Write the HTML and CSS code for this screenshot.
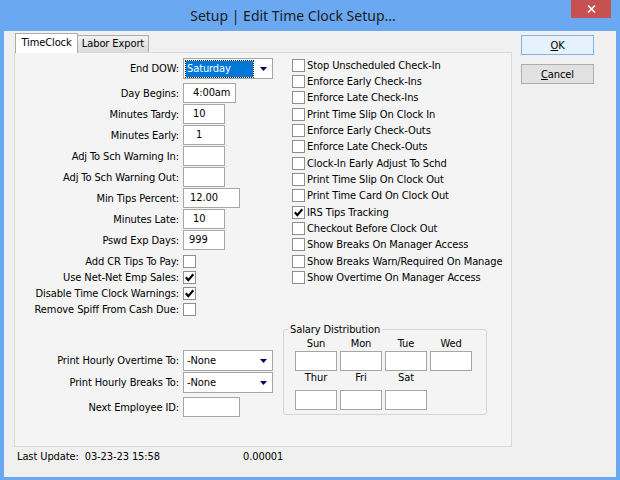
FILE: index.html
```html
<!DOCTYPE html>
<html lang="en">
<head>
    <meta charset="UTF-8">
    <title>Setup | Edit Time Clock Setup...</title>
    <link rel="stylesheet" href="styles.css">
</head>
<body>
<div class="window">
    <div class="titlebar">
        <div class="title">Setup | Edit Time Clock Setup...</div>
        <div class="close">
            <svg width="9" height="8" viewBox="0 0 9 8"><path d="M1 0.5L8 7.5M8 0.5L1 7.5" stroke="#fff" stroke-width="1.6"/></svg>
        </div>
    </div>

    <div class="client">
        <div class="main">
            <div class="tabframe">
                <div class="tabs">
                    <div class="tab active">TimeClock</div>
                    <div class="tab">Labor Export</div>
                </div>

                <div class="panel">
                    <div class="col-left">
                        <div class="field-row select-row">
                            <span class="field-label">End DOW:</span>
                            <div class="select">
                                <span class="select-value focused">Saturday</span>
                                <svg class="arrow" width="7" height="4" viewBox="0 0 7 4"><polygon points="0,0 7,0 3.5,4" fill="#000060"/></svg>
                            </div>
                        </div>
                        <div class="field-row">
                            <span class="field-label">Day Begins:</span>
                            <span class="input w-53 pad-10">4:00am</span>
                        </div>
                        <div class="field-row">
                            <span class="field-label">Minutes Tardy:</span>
                            <span class="input w-42 pad-10">10</span>
                        </div>
                        <div class="field-row">
                            <span class="field-label">Minutes Early:</span>
                            <span class="input w-42 pad-13">1</span>
                        </div>
                        <div class="field-row">
                            <span class="field-label">Adj To Sch Warning In:</span>
                            <span class="input w-42"></span>
                        </div>
                        <div class="field-row">
                            <span class="field-label">Adj To Sch Warning Out:</span>
                            <span class="input w-42"></span>
                        </div>
                        <div class="field-row">
                            <span class="field-label">Min Tips Percent:</span>
                            <span class="input w-57 pad-7">12.00</span>
                        </div>
                        <div class="field-row">
                            <span class="field-label">Minutes Late:</span>
                            <span class="input w-42 pad-10">10</span>
                        </div>
                        <div class="field-row">
                            <span class="field-label">Pswd Exp Days:</span>
                            <span class="input w-42 pad-6">999</span>
                        </div>

                        <div class="check-rows">
                            <div class="check-row">
                                <span class="field-label">Add CR Tips To Pay:</span>
                                <span class="check"></span>
                            </div>
                            <div class="check-row">
                                <span class="field-label">Use Net-Net Emp Sales:</span>
                                <span class="check"><svg viewBox="0 0 11 11"><path d="M1.8 5.3L4.3 8.2L9.3 2.3"/></svg></span>
                            </div>
                            <div class="check-row">
                                <span class="field-label">Disable Time Clock Warnings:</span>
                                <span class="check"><svg viewBox="0 0 11 11"><path d="M1.8 5.3L4.3 8.2L9.3 2.3"/></svg></span>
                            </div>
                            <div class="check-row">
                                <span class="field-label">Remove Spiff From Cash Due:</span>
                                <span class="check"></span>
                            </div>
                        </div>

                        <div class="print-rows">
                            <div class="field-row select-row tight">
                                <span class="field-label">Print Hourly Overtime To:</span>
                                <div class="select">
                                    <span class="select-value">-None</span>
                                    <svg class="arrow" width="7" height="4" viewBox="0 0 7 4"><polygon points="0,0 7,0 3.5,4" fill="#000060"/></svg>
                                </div>
                            </div>
                            <div class="field-row select-row">
                                <span class="field-label">Print Hourly Breaks To:</span>
                                <div class="select">
                                    <span class="select-value">-None</span>
                                    <svg class="arrow" width="7" height="4" viewBox="0 0 7 4"><polygon points="0,0 7,0 3.5,4" fill="#000060"/></svg>
                                </div>
                            </div>
                            <div class="field-row">
                                <span class="field-label">Next Employee ID:</span>
                                <span class="input w-57"></span>
                            </div>
                        </div>
                    </div>

                    <div class="col-right">
                        <ul class="checklist">
                            <li><span class="check"></span>Stop Unscheduled Check-In</li>
                            <li><span class="check"></span>Enforce Early Check-Ins</li>
                            <li><span class="check"></span>Enforce Late Check-Ins</li>
                            <li><span class="check"></span>Print Time Slip On Clock In</li>
                            <li><span class="check"></span>Enforce Early Check-Outs</li>
                            <li><span class="check"></span>Enforce Late Check-Outs</li>
                            <li><span class="check"></span>Clock-In Early Adjust To Schd</li>
                            <li><span class="check"></span>Print Time Slip On Clock Out</li>
                            <li><span class="check"></span>Print Time Card On Clock Out</li>
                            <li><span class="check"><svg viewBox="0 0 11 11"><path d="M1.8 5.3L4.3 8.2L9.3 2.3"/></svg></span>IRS Tips Tracking</li>
                            <li><span class="check"></span>Checkout Before Clock Out</li>
                            <li><span class="check"></span>Show Breaks On Manager Access</li>
                            <li><span class="check"></span>Show Breaks Warn/Required On Manage</li>
                            <li><span class="check"></span>Show Overtime On Manager Access</li>
                        </ul>

                        <fieldset class="salary">
                            <legend>Salary Distribution</legend>
                            <div class="days">
                                <div class="day"><span class="day-name">Sun</span><span class="input"></span></div>
                                <div class="day"><span class="day-name">Mon</span><span class="input"></span></div>
                                <div class="day"><span class="day-name">Tue</span><span class="input"></span></div>
                                <div class="day"><span class="day-name">Wed</span><span class="input"></span></div>
                            </div>
                            <div class="days days-second">
                                <div class="day"><span class="day-name">Thur</span><span class="input"></span></div>
                                <div class="day"><span class="day-name">Fri</span><span class="input"></span></div>
                                <div class="day"><span class="day-name">Sat</span><span class="input"></span></div>
                            </div>
                        </fieldset>
                    </div>
                </div>
            </div>

            <div class="buttons">
                <button class="btn btn-default"><u>O</u>K</button>
                <button class="btn"><u>C</u>ancel</button>
            </div>
        </div>

        <div class="status">
            <span class="status-left"><span class="status-label">Last Update:</span>03-23-23 15:58</span>
            <span>0.00001</span>
        </div>
    </div>
</div>
</body>
</html>
```

FILE: styles.css
```css
* {
    box-sizing: border-box;
}

body {
    margin: 0;
    background: #6aa9f2;
    font-family: "DejaVu Sans Condensed", "Liberation Sans", sans-serif;
    font-size: 11px;
    letter-spacing: -0.1px;
    color: #000;
}

.window {
    width: 620px;
    height: 480px;
    display: flex;
    flex-direction: column;
}

.titlebar {
    height: 31px;
    flex-shrink: 0;
    display: flex;
}

.title {
    flex: 1;
    padding: 5px 0 0 15px;
    text-align: center;
    font-family: "Noto Sans", sans-serif;
    font-size: 14px;
    letter-spacing: 0;
    line-height: 22px;
    color: #1a1a1a;
}

.close {
    width: 40px;
    height: 18px;
    margin-right: 9px;
    background: #c75050;
    display: flex;
    align-items: center;
    justify-content: center;
}

.client {
    flex: 1;
    margin: 0 4px 3px 4px;
    background: #f0f0f0;
    display: flex;
    flex-direction: column;
}

.main {
    display: flex;
    padding: 2px 0 0 10px;
}

.tabframe {
    width: 498px;
}

.tabs {
    display: flex;
    align-items: flex-end;
    height: 19px;
    padding-left: 1px;
}

.tab {
    width: 71px;
    height: 17px;
    border: 1px solid #acacac;
    border-left: 0;
    border-bottom: 0;
    background: linear-gradient(#f2f2f2, #dadada);
    text-align: center;
    line-height: 16px;
}

.tab.active {
    width: 63px;
    height: 20px;
    margin-bottom: -1px;
    border-left: 1px solid #acacac;
    background: #fff;
    line-height: 18px;
    position: relative;
    z-index: 1;
}

.panel {
    height: 395px;
    border: 1px solid #d9d9d9;
    background: #f4f4f4;
    display: flex;
}

.col-left {
    width: 268px;
    padding-top: 5px;
}

.field-row {
    display: flex;
    align-items: center;
    height: 20px;
    margin-bottom: 1px;
}

.select-row {
    height: 21px;
    margin-bottom: 4px;
}

.select-row.tight {
    margin-bottom: 1px;
}

.field-label {
    width: 164px;
    margin-right: 4px;
    text-align: right;
    white-space: nowrap;
}

.input {
    display: block;
    height: 20px;
    border: 1px solid #a6a6a6;
    background: #fff;
    line-height: 18px;
    white-space: nowrap;
}

.w-42 { width: 42px; }
.w-53 { width: 53px; }
.w-57 { width: 57px; }
.pad-6 { padding-left: 5px; }
.pad-7 { padding-left: 6px; }
.pad-10 { padding-left: 9px; }
.pad-13 { padding-left: 12px; }

.select {
    width: 90px;
    height: 21px;
    border: 1px solid #a6a6a6;
    background: #fff;
    display: flex;
    align-items: center;
}

.select-value {
    padding-left: 3px;
    line-height: 16px;
}

.select-value.focused {
    width: 67px;
    height: 16px;
    margin-left: 2px;
    padding-left: 1px;
    background: #0078d7;
    color: #fff;
    outline: 1px dotted #222;
}

.arrow {
    margin: 1px 5px 0 auto;
}

.check {
    width: 13px;
    height: 13px;
    border: 1px solid #8e8f8f;
    background: #fff;
    display: inline-flex;
    flex-shrink: 0;
}

.check svg {
    width: 11px;
    height: 11px;
}

.check path {
    fill: none;
    stroke: #000;
    stroke-width: 2.1;
}

.check-rows {
    margin-top: 3px;
}

.check-row {
    display: flex;
    align-items: center;
    height: 16px;
}

.print-rows {
    margin-top: 33px;
}

.col-right {
    flex: 1;
    padding-top: 4px;
}

.checklist {
    list-style: none;
    margin: 0;
    padding: 0 0 0 9px;
}

.checklist li {
    display: flex;
    align-items: center;
    gap: 2px;
    height: 16.33px;
    white-space: nowrap;
}

.salary {
    width: 204px;
    min-width: 0;
    margin: 37px 0 0 0;
    padding: 0 0 4px 11px;
    border: 1px solid #d5d5d5;
    border-radius: 3px;
}

.salary legend {
    margin-left: -7px;
    padding: 0 2px;
    line-height: 14px;
}

.days {
    display: grid;
    grid-template-columns: repeat(4, 42px);
    column-gap: 3px;
}

.day {
    display: flex;
    flex-direction: column;
}

.day-name {
    text-align: center;
    line-height: 14px;
}

.days-second .day-name {
    margin-bottom: 5px;
}

.buttons {
    display: flex;
    flex-direction: column;
    gap: 9px;
    margin: 2px 0 0 9px;
}

.btn {
    width: 73px;
    height: 20px;
    padding: 0;
    border: 1px solid #adadad;
    background: #e1e1e1;
    font: inherit;
    letter-spacing: inherit;
    color: #000;
}

.btn-default {
    border-color: #7eb4ea;
    background: #e5f1fb;
}

.status {
    display: flex;
    padding: 3px 0 0 13px;
    line-height: 14px;
}

.status-left {
    width: 226px;
}

.status-label {
    margin-right: 6px;
}
```
